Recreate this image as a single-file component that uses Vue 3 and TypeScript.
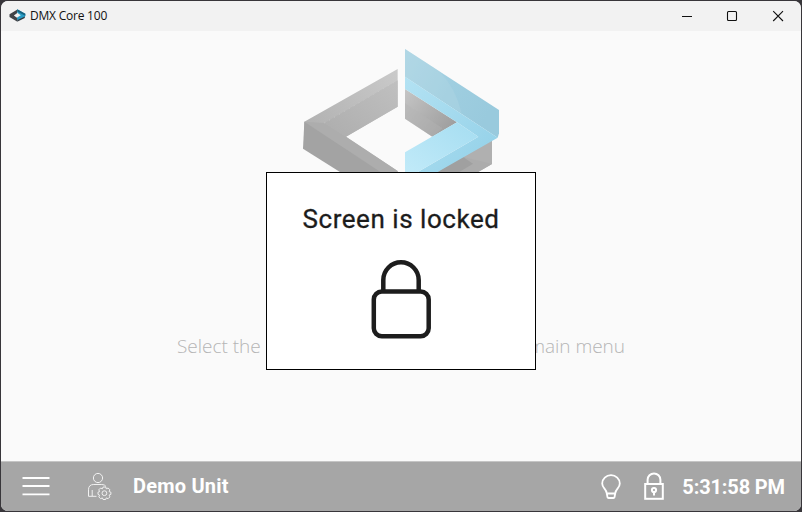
<script setup lang="ts">
import { ref } from 'vue'

const title = ref('DMX Core 100')
const unitName = ref('Demo Unit')
const clock = ref('5:31:58 PM')
const lockMessage = ref('Screen is locked')
</script>

<template>
  <div class="desktop">
    <div class="window">
      <header class="titlebar">
        <svg class="app-icon" viewBox="0 0 17 13">
          <path d="M8 .8v3.5L4.8 6.4 8 8.8v3.7L.5 8V5.2z" fill="#414448" />
          <path d="M8.2 9v3.7L15.8 9V6z" fill="#303840" />
          <path d="M8.2.2v3.6l3.6 2.5-3.6 2.2v2.8l8.1-4V4.7z" fill="#279bc4" />
          <path d="M8.2.2l8.1 4.5v2L8.2 2.5z" fill="#17627f" />
        </svg>
        <span class="title">{{ title }}</span>
        <div class="controls">
          <svg viewBox="0 0 12 12"><path d="M1 6.5h10" /></svg>
          <svg viewBox="0 0 12 12"><rect x="1.5" y="1.5" width="9" height="9" rx="1" /></svg>
          <svg viewBox="0 0 12 12"><path d="M1.2 1.2l9.8 9.8M11 1.2L1.2 11" /></svg>
        </div>
      </header>

      <main class="content">
        <svg class="logo" viewBox="0 0 630 420">
          <defs>
            <linearGradient id="grayLeft" x1="1" y1="0" x2="0" y2="1">
              <stop offset="0" stop-color="#cacaca" /><stop offset="1" stop-color="#a9a9a9" />
            </linearGradient>
            <linearGradient id="grayFace" x1="1" y1="0" x2="0" y2="1">
              <stop offset="0" stop-color="#c0c0c0" /><stop offset="1" stop-color="#adadad" />
            </linearGradient>
            <linearGradient id="grayInner" x1="0" y1="0" x2="1" y2=".7">
              <stop offset="0" stop-color="#c5c5c5" /><stop offset="1" stop-color="#9e9e9e" />
            </linearGradient>
            <linearGradient id="blueTop" x1="0" y1="0" x2="1" y2=".5">
              <stop offset="0" stop-color="#b2d8e7" /><stop offset=".55" stop-color="#9fcee0" /><stop offset="1" stop-color="#99cadd" />
            </linearGradient>
            <linearGradient id="blueEdge" x1="0" y1="0" x2="1" y2=".8">
              <stop offset="0" stop-color="#b3e2f3" /><stop offset="1" stop-color="#94d1e8" />
            </linearGradient>
            <linearGradient id="blueFront" x1="0" y1="1" x2="1" y2="0">
              <stop offset="0" stop-color="#c3ebf9" /><stop offset="1" stop-color="#a5ddf1" />
            </linearGradient>
          </defs>
          <path d="M305 87V200L150 290 305 393V420H170L25 300V245Z" fill="url(#grayLeft)" />
          <path d="M305 121V200L150 290 85 249Z" fill="url(#grayFace)" />
          <path d="M25 245L85 249 150 290 305 393V420H250Z" fill="#adadad" />
          <path d="M25 245L290 420H170L21 326Z" fill="#a3a3a3" />
          <path d="M85 249L305 121" stroke="#cdcdcd" stroke-width="2" stroke-dasharray="3 14" fill="none" />
          <path d="M327 147L483 247 409 290 327 236Z" fill="url(#grayInner)" />
          <path d="M327 190L440 265 409 290 327 236Z" fill="#b3b3b3" opacity=".4" />
          <path d="M588 300V372L505 420H380Z" fill="#b0b0b0" />
          <path d="M500 350L588 372 505 420H380Z" fill="#acacac" />
          <path d="M430 393L500 350 531 371 450 420H390Z" fill="#a0a0a0" />
          <path d="M327 27L609 210V280L605 293 327 110Z" fill="url(#blueTop)" />
          <path d="M327 27L430 94Q480 145 497 220L327 110Z" fill="#b2d6e4" opacity=".4" />
          <path d="M327 110L605 293 430 393 385 420H327L364 397 547 290 483 247 327 147Z" fill="url(#blueEdge)" />
          <path d="M483 247L547 290 364 397 327 420V337Z" fill="url(#blueFront)" />
        </svg>
        <div class="hint"><span>Select the</span><span>main menu</span></div>

        <section class="dialog">
          <h1>{{ lockMessage }}</h1>
          <svg class="big-lock" viewBox="0 0 60 80">
            <path d="M12.3 31V20a17.7 17.7 0 0 1 35.4 0v11" />
            <rect x="2.8" y="31.5" width="54.9" height="44.7" rx="8" />
          </svg>
        </section>
      </main>

      <footer class="statusbar">
        <svg class="menu-icon" viewBox="0 0 28 20"><path d="M.5 2h27M.5 10h27M.5 18.3h27" /></svg>
        <svg class="user-icon" viewBox="0 0 25 29">
          <circle cx="11" cy="6" r="4.6" />
          <path d="M9.5 24.3H1.5v-6.5q0-5.3 5.3-5.3h8q3 0 4.3 2.1M5.2 24v-6" />
          <circle cx="17.4" cy="21.2" r="2.4" />
          <path d="M16.1 15h2.6l.6 1.8 1.8-.8 1.8 1.8-.8 1.8 1.8.6v2.2l-1.8.7.8 1.8-1.8 1.8-1.8-.8-.6 1.6h-2.6l-.7-1.6-1.8.8-1.8-1.8.8-1.8-1.6-.7v-2.2l1.6-.6-.8-1.8 1.8-1.8 1.8.8z" />
        </svg>
        <span class="unit">{{ unitName }}</span>
        <svg class="bulb-icon" viewBox="0 0 20 26">
          <path d="M5.8 19.5Q5.6 17 3.3 14.3Q1.2 11.8 1.2 9.5A8.8 8.3 0 0 1 18.8 9.5Q18.8 11.8 16.7 14.3Q14.4 17 14.2 19.5ZM5.8 19.5L6.5 23.2Q6.7 24 7.5 24H12.5Q13.3 24 13.5 23.2L14.2 19.5" />
        </svg>
        <svg class="lock-icon" viewBox="0 0 20 28">
          <path d="M3.6 11.5V7.8a6.4 6.4 0 0 1 12.8 0v3.7" />
          <rect x="1.2" y="12" width="17.6" height="14.8" />
          <circle cx="10" cy="18" r="2.1" /><path d="M10 20v3.5" />
        </svg>
        <time class="clock">{{ clock }}</time>
      </footer>
    </div>
  </div>
</template>

<style>
body { margin: 0; overflow: hidden; }
</style>

<style scoped>
* { box-sizing: border-box; }
.desktop { width: 802px; height: 512px; padding: 1px; background: #38363a; }
.window { height: 510px; display: flex; flex-direction: column; border-radius: 7px; overflow: hidden; background: #fafafa; }
.titlebar { height: 30px; flex: none; display: flex; align-items: center; padding-left: 8px; background: #f2f2f2; }
.app-icon { width: 17px; height: 13px; margin-bottom: 1px; }
.title { margin-left: 4px; font: 12px/16px "Open Sans", sans-serif; letter-spacing: -.22px; color: #111; }
.controls { margin-left: auto; display: flex; gap: 34px; padding-right: 17px; }
.controls svg { width: 12px; height: 12px; margin-top: -1px; fill: none; stroke: #111; stroke-width: 1.1; }
.controls svg:first-child { margin-right: -1px; }
.content { position: relative; flex: 1; display: flex; flex-direction: column; align-items: center; }
.logo { width: 210px; height: 140px; margin-top: 9px; flex: none; }
.hint { width: 448px; margin-top: 152px; display: flex; justify-content: space-between; font: 300 19px/28px "Open Sans", sans-serif; letter-spacing: -.03px; color: #b5b5b5; }
.dialog { position: absolute; left: 265px; top: 141px; width: 270px; height: 198px; border: 1px solid #000; background: #fff; display: flex; flex-direction: column; align-items: center; }
.dialog h1 { margin: 30px 0 0; font: 400 26px/32px Roboto, sans-serif; letter-spacing: .54px; color: #1c1c1c; -webkit-text-stroke: .3px #1c1c1c; white-space: nowrap; }
.big-lock { width: 60px; height: 80px; margin-top: 25px; fill: none; stroke: #1d1d1d; stroke-width: 4.5; }
.statusbar { height: 50px; flex: none; display: flex; align-items: center; padding: 0 16px 0 21px; border-top: 1px solid #c5c5c5; background: #a6a6a6; color: #fff; }
.statusbar svg { flex: none; fill: none; stroke: #fff; }
.menu-icon { width: 28px; height: 20px; margin-bottom: 1px; stroke-width: 1.8; }
.user-icon { width: 25px; height: 29px; margin: 0 0 1px 37px; stroke-width: 1; opacity: .85; }
.unit { margin: 0 0 1px 21px; font: 700 20px/24px Roboto, sans-serif; letter-spacing: .2px; }
.bulb-icon { width: 20px; height: 26px; margin-left: auto; stroke-width: 1.8; }
.lock-icon { width: 20px; height: 28px; margin: 0 0 2px 23px; stroke-width: 2; }
.clock { margin-left: 18.5px; font: 700 20px/24px Roboto, sans-serif; letter-spacing: -.13px; }
</style>
